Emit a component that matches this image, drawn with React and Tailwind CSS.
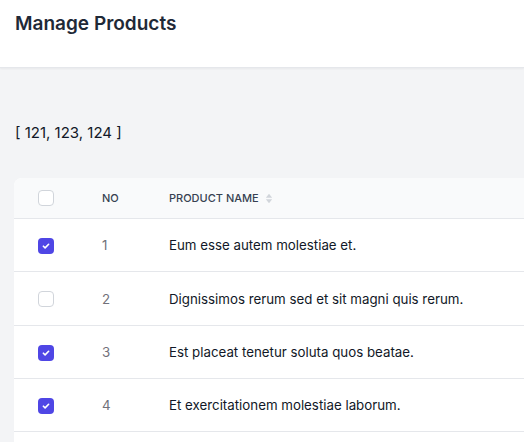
import React from 'react';

const products = [
  { no: 1, name: 'Eum esse autem molestiae et.', checked: true },
  { no: 2, name: 'Dignissimos rerum sed et sit magni quis rerum.', checked: false },
  { no: 3, name: 'Est placeat tenetur soluta quos beatae.', checked: true },
  { no: 4, name: 'Et exercitationem molestiae laborum.', checked: true },
  { no: 5, name: 'Quia aut rerum dolorem.', checked: false },
];

const Check = ({ checked }) =>
  checked ? (
    <span className="flex h-4 w-4 items-center justify-center rounded-[4px] bg-[#4f46e5]">
      <svg viewBox="0 0 16 16" className="h-3 w-3" fill="none" stroke="white" strokeWidth="2.2" strokeLinecap="round" strokeLinejoin="round">
        <path d="M4.5 8.3l2.3 2.2 4.7-4.8" />
      </svg>
    </span>
  ) : (
    <span className="block h-4 w-4 rounded-[4px] border border-[#d1d5db] bg-white" />
  );

const App = () => {
  return (
    <div className="min-h-screen bg-[#f3f4f6]" style={{ fontFamily: 'Inter, "Noto Sans", sans-serif' }}>
      <header className="h-[68px] border-b border-[#e5e7eb] bg-white px-[15px] pt-[12px] shadow-[0_1px_2px_rgba(0,0,0,0.05)]">
        <h1 className="text-[19px] font-semibold leading-[24px] text-[#1f2937]">Manage Products</h1>
      </header>
      <div className="pl-[14px] pt-[55px]">
        <p className="pl-px text-[15px] leading-[20px] text-[#111827]">[ 121, 123, 124 ]</p>
        <div className="mt-[35px] overflow-hidden rounded-tl-lg bg-white">
          <div className="flex h-[41px] items-center border-b border-[#e5e7eb] bg-[#f9fafb] text-[11px] font-medium uppercase text-[#374151]">
            <div className="w-[88px] pl-[24px]">
              <Check checked={false} />
            </div>
            <div className="w-[67px]">No</div>
            <div className="flex items-center gap-[6px]">
              Product Name
              <svg viewBox="0 0 10 14" className="h-[11px] w-[8px]" fill="#d1d5db">
                <path d="M5 1L9 6H1z" />
                <path d="M5 13L1 8h8z" />
              </svg>
            </div>
          </div>
          {products.map((p) => (
            <div key={p.no} className="flex h-[53.33px] items-center border-b border-[#e5e7eb] pt-[2px] text-[13.3px]">
              <div className="w-[88px] pl-[24px]">
                <Check checked={p.checked} />
              </div>
              <div className="w-[67px] text-[#71717a]">{p.no}</div>
              <div className="text-[#111827]">{p.name}</div>
            </div>
          ))}
        </div>
      </div>
    </div>
  );
};

export default App;
